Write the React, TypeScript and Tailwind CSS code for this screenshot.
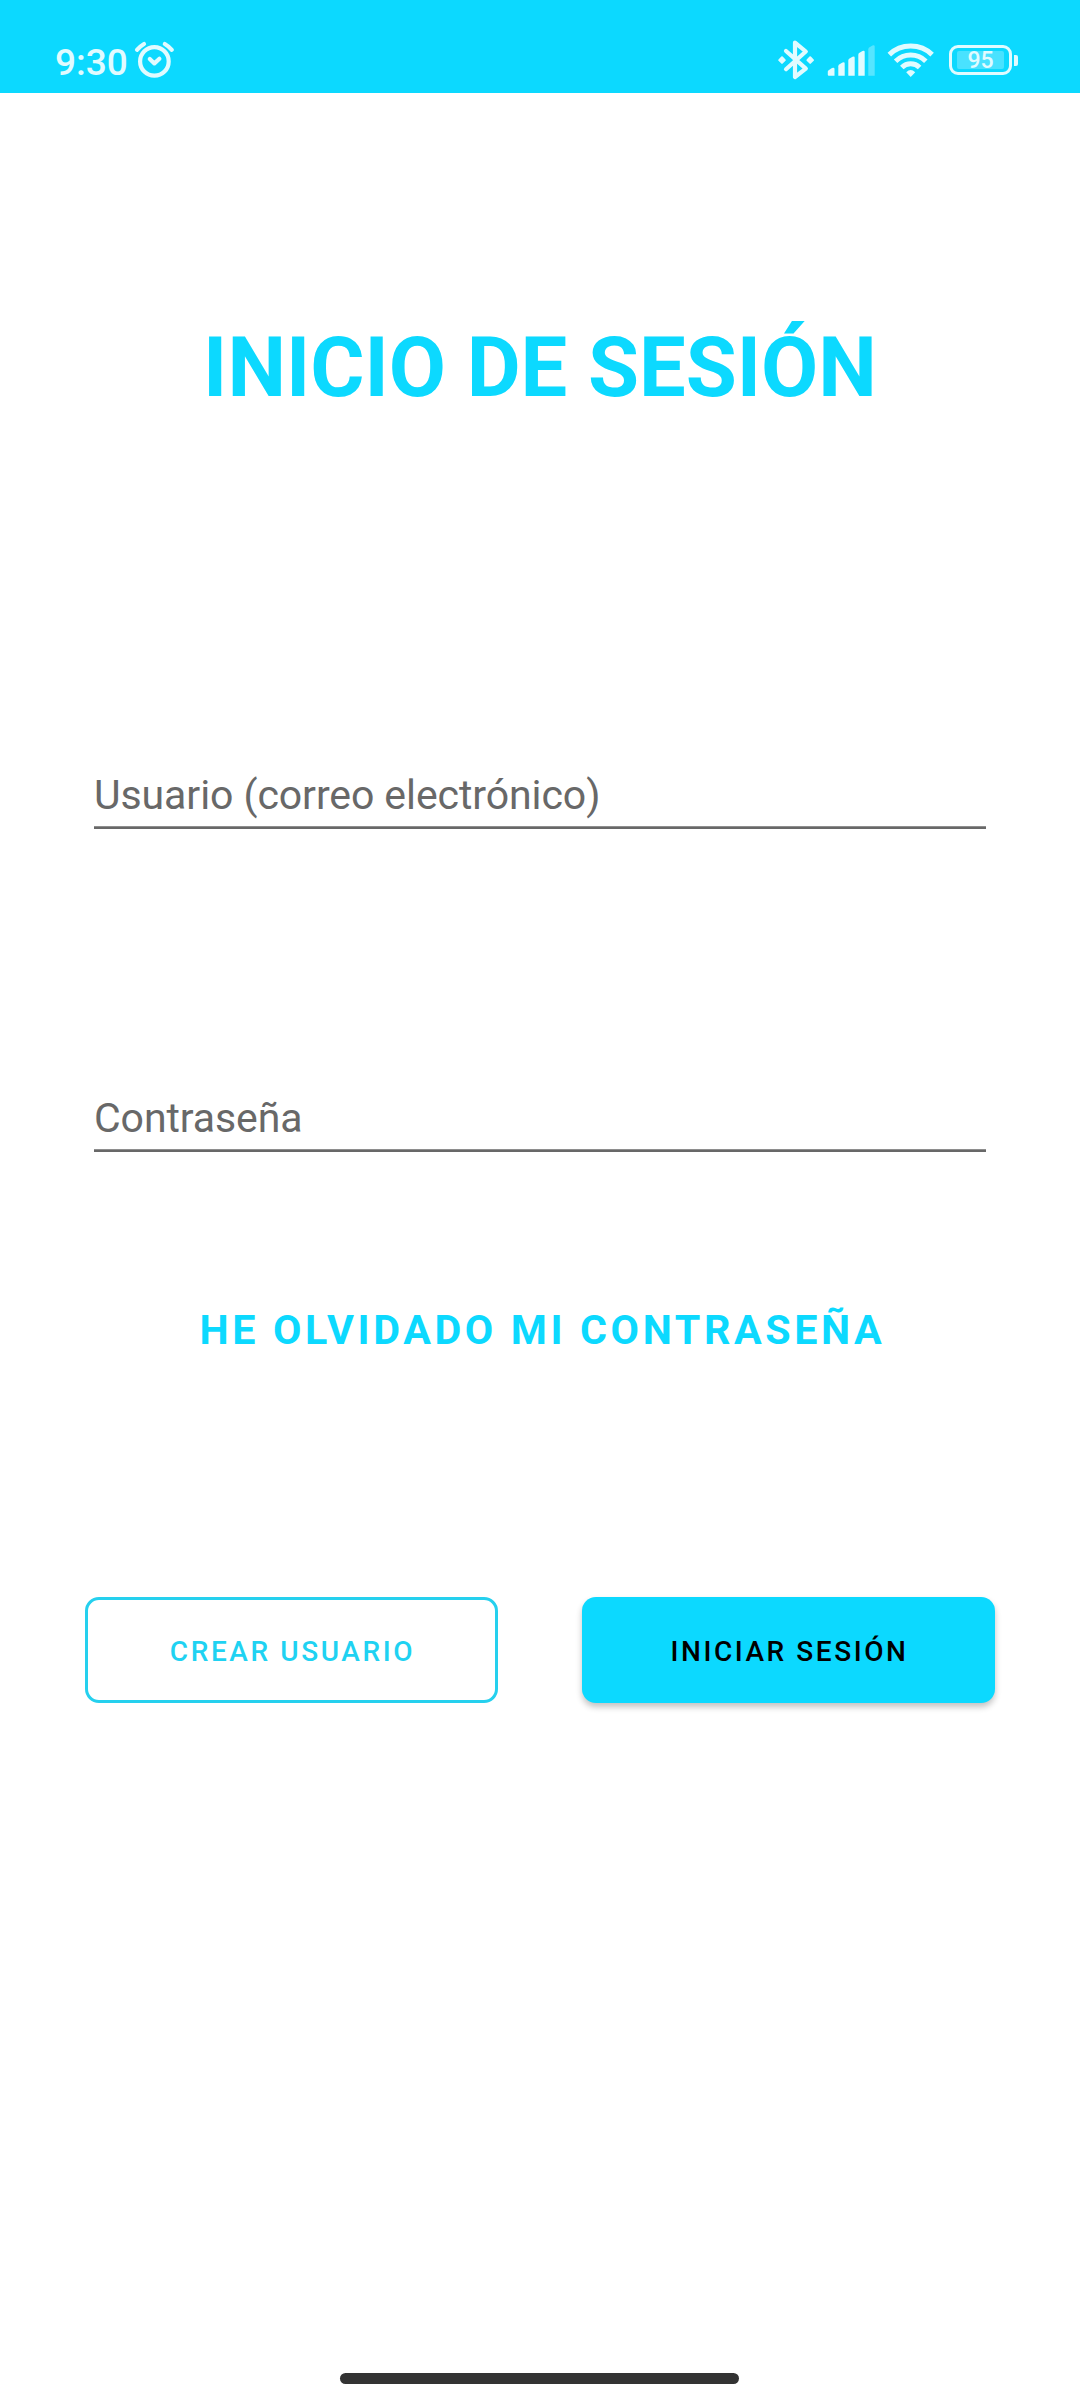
function AlarmIcon() {
  return (
    <svg className="ml-[6px] h-[40px] w-[42px]" viewBox="134 40 42 40" fill="none" stroke="currentColor" strokeWidth="4.2">
      <circle cx="154.4" cy="61.4" r="14.3" />
      <path d="M149.8 59L154.4 63.4L159.4 58.8" strokeLinecap="round" strokeLinejoin="round" />
      <path d="M137 49.8Q140 46.4 144 44M171.8 49.8Q168.8 46.4 164.8 44" strokeLinecap="round" />
    </svg>
  );
}

function BluetoothIcon() {
  return (
    <svg className="h-[40px] w-[38px]" viewBox="777 40 38 40">
      <path
        d="M786 51L805.8 68.6L795 77V42.6L805.8 51.5L786 69.2"
        fill="none"
        stroke="currentColor"
        strokeWidth="4.2"
        strokeLinecap="round"
        strokeLinejoin="round"
      />
      <path
        d="M779.2 60.1L782 57.3L784.8 60.1L782 62.9ZM807.4 60.1L810.2 57.3L813 60.1L810.2 62.9Z"
        fill="currentColor"
        stroke="currentColor"
        strokeWidth="2"
        strokeLinejoin="round"
      />
    </svg>
  );
}

function SignalIcon() {
  return (
    <svg className="ml-[12px] h-[40px] w-[49px]" viewBox="827 40 49 40" fill="currentColor">
      <path d="M827.8 71.5Q827.8 70.5 829 70L832 68Q834.5 67 834.5 69V75.8H828.8Q827.8 75.8 827.8 74.8Z" />
      <path d="M838.3 66.2Q838.3 65 839.5 64.3L842.5 62.6Q844.7 61.6 844.7 63.6V75.8H838.3Z" />
      <path d="M848.3 60.4Q848.3 59.2 849.5 58.5L852.5 56.8Q854.7 55.8 854.7 57.8V75.8H848.3Z" />
      <path d="M858.3 54.7Q858.3 53.5 859.5 52.8L862.5 51.1Q864.7 50.1 864.7 52.1V75.8H858.3Z" />
      <path d="M868.3 49.2Q868.3 48 869.5 47.3L872.5 45.6Q874.7 44.6 874.7 46.6V75.8H868.3Z" opacity="0.35" />
    </svg>
  );
}

function WifiIcon() {
  return (
    <svg className="ml-[11px] h-[40px] w-[48px]" viewBox="887 40 48 40" fill="none" stroke="currentColor" strokeWidth="5">
      <path d="M889.3 54.6Q898 46 910.7 46Q923.4 46 932.1 54.6" />
      <path d="M895.6 61.2Q902 55 910.7 55Q919.4 55 925.8 61.2" />
      <path d="M901.8 67.4Q905.5 63.7 910.7 63.7Q915.9 63.7 919.6 67.4" />
      <path d="M906.2 72.2Q910.7 67.8 915.2 72.2L910.7 77Z" fill="currentColor" stroke="none" />
    </svg>
  );
}

function Battery() {
  return (
    <div className="ml-[14px] flex h-[40px] items-center">
      <div className="flex h-[30px] w-[63px] items-center justify-center rounded-[9px] border-3 border-current">
        <div className="flex h-[18px] w-[47px] items-center justify-center rounded-[2px] bg-white/25 pt-[2px] text-[23px] leading-[18px] font-medium">
          95
        </div>
      </div>
      <div className="ml-[2px] h-[11px] w-[4px] rounded-r-[2px] bg-current" />
    </div>
  );
}

function Field({ label }: { label: string }) {
  return (
    <div className="flex w-[892px] flex-col">
      <span className="h-[55px] text-[41px] leading-[48px] tracking-[-0.08px] text-[#686868]">{label}</span>
      <div className="h-[3px] border-t border-[#8e8e8e] bg-[#686868]" />
    </div>
  );
}

export default function App() {
  return (
    <div className="flex h-[2400px] w-[1080px] flex-col bg-white font-['Roboto',sans-serif]">
      <header className="flex h-[93px] justify-between bg-[#0cd9ff] pt-[40px] pr-[62px] pl-[55px] text-[#e1fbff]">
        <div className="flex">
          <span className="text-[37px] leading-[46px] font-medium">9:30</span>
          <AlarmIcon />
        </div>
        <div className="flex">
          <BluetoothIcon />
          <SignalIcon />
          <WifiIcon />
          <Battery />
        </div>
      </header>

      <main className="flex flex-1 flex-col items-center">
        <h1 className="mt-[215px] text-[83px] leading-[120px] font-bold text-[#0cd9ff]">INICIO DE SESIÓN</h1>

        <div className="mt-[343px] flex flex-col gap-[265px]">
          <Field label="Usuario (correo electrónico)" />
          <Field label="Contraseña" />
        </div>

        <button className="mt-[154px] pl-[5px] text-[41.25px] leading-[48px] font-bold tracking-[3.6px] text-[#0cd9ff]">
          HE OLVIDADO MI CONTRASEÑA
        </button>

        <div className="mt-[243px] flex gap-[84px]">
          <button className="h-[106px] w-[413px] rounded-[14px] border-3 border-[#25d0ee] pt-[3px] pl-[2px] text-[28px] font-medium tracking-[2.6px] text-[#1fd2f2]">
            CREAR USUARIO
          </button>
          <button className="h-[106px] w-[413px] rounded-[14px] bg-[#0cd9ff] pt-[3px] pl-[2px] text-[28px] font-medium tracking-[2.55px] text-black shadow-[0_4px_6px_rgba(0,0,0,0.24)]">
            INICIAR SESIÓN
          </button>
        </div>
      </main>

      <div className="mb-[16px] ml-[340px] h-[11px] w-[399px] rounded-full bg-[#333333]" />
    </div>
  );
}
